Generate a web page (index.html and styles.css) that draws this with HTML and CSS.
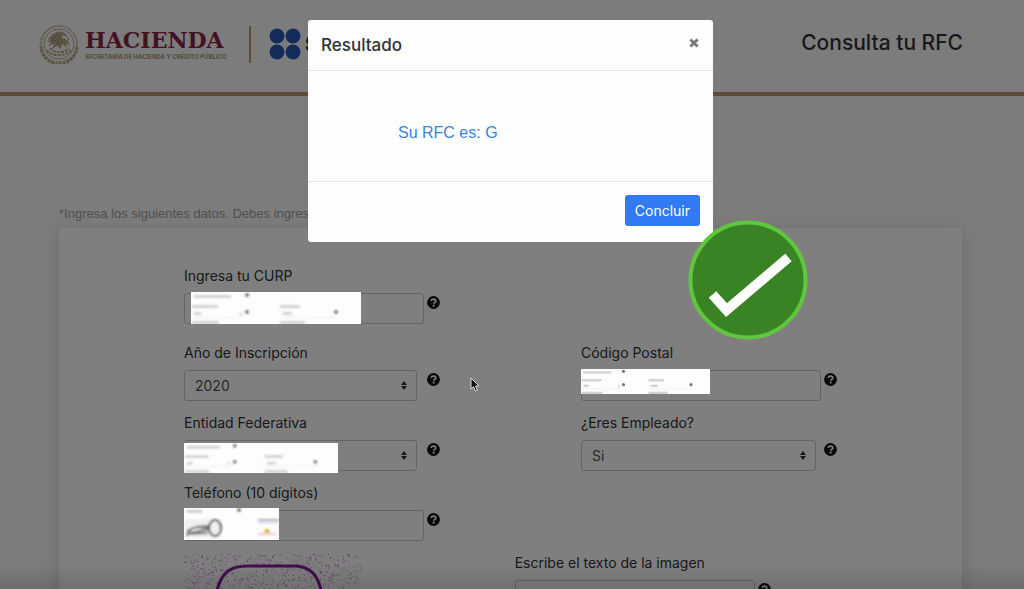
FILE: index.html
```html
<!DOCTYPE html>
<html lang="es">
    <head>
        <meta charset="utf-8">
        <meta name="viewport" content="width=device-width, initial-scale=1">
        <title>Consulta tu RFC</title>
        <link rel="stylesheet" href="styles.css">
    </head>
    <body>
        <!-- simbolos reutilizados -->
        <svg class="defs" aria-hidden="true">
            <symbol id="help" viewBox="0 0 512 512">
                <circle cx="256" cy="256" r="252" fill="#111"/>
                <path d="M160 192c12-46 46-70 96-70 54 0 90 30 90 74 0 62-82 56-82 112" fill="none" stroke="#fff" stroke-width="64"/>
                <circle cx="262" cy="378" r="42" fill="#fff"/>
            </symbol>
            <filter id="soft"><feGaussianBlur stdDeviation="0.9"/></filter>
            <symbol id="mask" viewBox="0 0 170 32" preserveAspectRatio="none">
                <rect width="170" height="32" fill="#fdfdfd"/>
                <g filter="url(#soft)" fill="#d2d2d6">
                    <rect x="3" y="3" width="37" height="3"/>
                    <rect x="1" y="13" width="26" height="3"/>
                    <rect x="89" y="13" width="20" height="3"/>
                    <rect x="3" y="20" width="7" height="3"/>
                    <rect x="49" y="20" width="2" height="4"/>
                    <rect x="92" y="20" width="9" height="3"/>
                    <rect x="1" y="29" width="27" height="3"/>
                    <rect x="89" y="29" width="25" height="3"/>
                    <rect x="0" y="25" width="50" height="1" fill="#eee"/>
                    <rect x="89" y="25" width="56" height="1" fill="#eee"/>
                    <circle cx="56" cy="3" r="2" fill="#777"/>
                    <circle cx="56" cy="20" r="2" fill="#777"/>
                    <circle cx="145" cy="20" r="2" fill="#777"/>
                </g>
            </symbol>
        </svg>

        <header class="header">
            <div class="brand">
                <svg class="seal" viewBox="0 0 40 40" aria-hidden="true">
                    <g fill="none" stroke="#b9a887">
                        <circle cx="20" cy="20" r="18" stroke-width="2" stroke-dasharray="1.4 1.1"/>
                        <path d="M2 22a18 18 0 0 0 36 0" stroke-width="3" stroke-dasharray="3 1"/>
                        <circle cx="20" cy="20" r="15" stroke-width="1"/>
                        <path d="M8 26c5 7 19 7 24 0M11 24c4 5 14 6 19 0" stroke-width="2" stroke-dasharray="3 1"/>
                    </g>
                    <path d="M9 16c3-6 9-10 15-8 3 1 4 3 3 5l-3-2-1 3c4 0 7 3 8 8l-4-3 1 5-5-4-1 5-4-3-5 3 2-5-6 2 3-4-4 0 4-3z" fill="#b9a887"/>
                    <path d="M12 15l9-4M13 18l10-4M17 20l7-3M27 12l3 3-2 2" fill="none" stroke="#9b8e70" stroke-width="1"/>
                </svg>
                <div class="hacienda">
                    <span class="hacienda-name">HACIENDA</span>
                    <span class="hacienda-sub">SECRETARÍA DE HACIENDA Y CRÉDITO PÚBLICO</span>
                </div>
                <span class="divider"></span>
                <svg class="sat-dots" viewBox="0 0 32 32" fill="#2a56b4" aria-hidden="true">
                    <circle cx="8" cy="8" r="7.5"/>
                    <circle cx="24" cy="8" r="7.5"/>
                    <circle cx="8" cy="24" r="7.5"/>
                    <circle cx="24" cy="24" r="7.5"/>
                </svg>
                <span class="sat">S</span>
            </div>
            <h1 class="title">Consulta tu RFC</h1>
        </header>

        <main class="content">
            <p class="hint">*Ingresa los siguientes datos. Debes ingresar</p>
            <form class="card">
                <div class="row row-first">
                    <div class="field">
                        <label for="curp">Ingresa tu CURP</label>
                        <input type="text" id="curp">
                        <svg class="help"><use href="#help"/></svg>
                        <svg class="mask mask-curp"><use href="#mask"/></svg>
                    </div>
                </div>
                <div class="row">
                    <div class="field">
                        <label for="anio">Año de Inscripción</label>
                        <div class="select"><select id="anio"><option>2020</option></select></div>
                        <svg class="help"><use href="#help"/></svg>
                    </div>
                    <div class="field">
                        <label for="cp">Código Postal</label>
                        <input type="text" id="cp">
                        <svg class="help"><use href="#help"/></svg>
                        <svg class="mask mask-cp"><use href="#mask"/></svg>
                    </div>
                </div>
                <div class="row">
                    <div class="field">
                        <label for="entidad">Entidad Federativa</label>
                        <div class="select"><select id="entidad"><option></option></select></div>
                        <svg class="help"><use href="#help"/></svg>
                        <svg class="mask mask-entidad"><use href="#mask"/></svg>
                    </div>
                    <div class="field">
                        <label for="empleado">¿Eres Empleado?</label>
                        <div class="select select-wide"><select id="empleado"><option>Si</option></select></div>
                        <svg class="help"><use href="#help"/></svg>
                    </div>
                </div>
                <div class="row">
                    <div class="field">
                        <label for="tel">Teléfono (10 dígitos)</label>
                        <input type="text" id="tel">
                        <svg class="help"><use href="#help"/></svg>
                        <svg class="mask mask-tel" viewBox="0 0 95 32">
                            <rect width="95" height="32" fill="#fdfdfd"/>
                            <g filter="url(#soft)">
                                <rect x="3" y="2" width="15" height="3" fill="#ccc"/>
                                <circle cx="55" cy="2" r="2" fill="#777"/>
                                <rect x="1" y="11" width="36" height="19" fill="#f0f0f0"/>
                                <path d="M3 28c1-9 12-10 22-10M3 23c8-5 14-4 22-3M6 25l20-4M4 26l20-1" fill="none" stroke="#777" stroke-width="2"/>
                                <ellipse cx="31" cy="20" rx="6" ry="8" fill="none" stroke="#555" stroke-width="2"/>
                                <path d="M74 12h21" stroke="#b0b0b4" stroke-width="2"/>
                                <path d="M74 15h21" stroke="#b9c2dd" stroke-width="1"/>
                                <path d="M74 26h18" stroke="#f2c9c9" stroke-width="2"/>
                                <path d="M80 24l3-3 3 3z" fill="#e5a200" stroke="#e5a200"/>
                            </g>
                        </svg>
                    </div>
                </div>
                <div class="row row-captcha">
                    <canvas class="captcha" id="captcha" width="178" height="60"></canvas>
                    <div class="field field-captcha">
                        <label for="texto">Escribe el texto de la imagen</label>
                        <input type="text" id="texto">
                        <svg class="help"><use href="#help"/></svg>
                    </div>
                </div>
            </form>
        </main>

        <div class="backdrop"></div>

        <div class="modal-wrap">
            <div class="modal" role="dialog" aria-labelledby="modal-title">
                <div class="modal-header">
                    <h2 class="modal-title" id="modal-title">Resultado</h2>
                    <button type="button" class="close" aria-label="Cerrar">
                        <svg viewBox="0 0 10 10"><path d="M2 2l6 6M8 2l-6 6" stroke="#777" stroke-width="2.4"/></svg>
                    </button>
                </div>
                <div class="modal-body">
                    <p class="result">Su RFC es: G</p>
                </div>
                <div class="modal-footer">
                    <button type="button" class="btn">Concluir</button>
                </div>
            </div>
        </div>

        <svg class="check" viewBox="0 0 120 120" aria-hidden="true">
            <circle cx="60" cy="60" r="57.5" fill="#3a8324" stroke="#5fc63e" stroke-width="4"/>
            <path d="M24.500 74.500L38.500 90L100.500 37.500" fill="none" stroke="#fff" stroke-width="10"/>
        </svg>

        <svg class="cursor" viewBox="0 0 10 15" aria-hidden="true">
            <path d="M1 1v11l2.500-2.300 1.800 4.100 2-0.900-1.800-3.900h3.500z" fill="#111" stroke="#ddd" stroke-width="1"/>
        </svg>

        <script src="captcha.js"></script>
    </body>
</html>
```

FILE: styles.css
```css
* {
    box-sizing: border-box;
}
body {
    margin: 0;
    height: 100vh;
    overflow: hidden;
    background: #f8f8f8;
    color: #303236;
    font-family: Inter, "Open Sans", sans-serif;
    font-size: 14px;
}
.defs {
    position: absolute;
    width: 0;
    height: 0;
}

/* encabezado */
.header {
    display: flex;
    align-items: center;
    justify-content: space-between;
    height: 96px;
    padding: 0 61px 4px 39px;
    border-bottom: 4px solid #b8946a;
}
.brand {
    display: flex;
    align-items: center;
}
.seal {
    width: 40px;
    height: 40px;
    margin-right: 6px;
}
.hacienda {
    display: flex;
    flex-direction: column;
    width: 164px;
}
.hacienda-name {
    color: #8a2444;
    font-family: "DejaVu Serif", serif;
    font-size: 22px;
    font-weight: bold;
    line-height: 26px;
}
.hacienda-sub {
    color: #a8977a;
    font-size: 6px;
    font-weight: 700;
    line-height: 8px;
    white-space: nowrap;
}
.divider {
    width: 2px;
    height: 37px;
    margin-right: 18px;
    background: #b8946a;
}
.sat-dots {
    width: 32px;
    height: 32px;
    margin-right: 4px;
}
.sat {
    color: #222;
    font-size: 22px;
    font-weight: 800;
}
.title {
    margin: 0;
    font-size: 21px;
    font-weight: 500;
    line-height: 24px;
    padding-bottom: 2px;
}

/* formulario */
.content {
    padding: 108px 62px 0 59px;
}
.hint {
    margin: 0 0 4px;
    color: #a0a0a0;
    font-family: "Liberation Sans", sans-serif;
    font-size: 13px;
    line-height: 20px;
}
.card {
    padding: 37px 0 40px 125px;
    background: #fff;
    box-shadow: 0 4px 16px rgba(0, 0, 0, .15);
}
.row {
    display: grid;
    grid-template-columns: 1fr 1fr;
    column-gap: 16px;
    margin-bottom: 11px;
}
.row-first {
    margin-bottom: 18px;
}
.row-captcha {
    grid-template-columns: 17fr 23fr;
    column-gap: 0;
}
.field {
    position: relative;
    display: grid;
    grid-template-columns: 63% 13px;
    column-gap: 3px;
    align-content: start;
}
.field-captcha {
    grid-template-columns: 240px 13px;
}
.field label {
    grid-column: 1 / -1;
    margin-bottom: 6px;
    line-height: 22px;
}
.field input,
.field select {
    width: 100%;
    height: 31px;
    padding: 0 10px;
    border: 1px solid #c8c8d0;
    border-radius: 3px;
    background: transparent;
    color: #555;
    font: inherit;
}
.field select {
    appearance: none;
}
.select {
    position: relative;
    width: 97%;
}
.select-wide {
    width: 98%;
}
.select::before,
.select::after {
    content: "";
    position: absolute;
    right: 10px;
    border: 3px solid transparent;
}
.select::before {
    top: 8px;
    border-bottom: 4px solid #333;
}
.select::after {
    top: 16px;
    border-top: 4px solid #333;
}
.help {
    width: 13px;
    height: 13px;
    margin-top: 3px;
}
.captcha {
    margin-top: 2px;
}

/* recuadros que tapan los datos personales */
.mask {
    position: absolute;
    z-index: 2;
}
.mask-curp {
    top: 27px;
    left: 7px;
    width: 170px;
    height: 32px;
}
.mask-cp {
    top: 27px;
    left: 0;
    width: 129px;
    height: 25px;
}
.mask-entidad {
    top: 31px;
    left: 0;
    width: 154px;
    height: 30px;
}
.mask-tel {
    top: 26px;
    left: 0;
    width: 95px;
    height: 32px;
}

/* modal */
.backdrop {
    position: fixed;
    inset: 0;
    z-index: 1;
    background: linear-gradient(transparent calc(100% - 24px), rgba(0, 0, 0, .12)), rgba(0, 0, 0, .5);
}
.modal-wrap {
    position: fixed;
    inset: 0 0 auto;
    z-index: 3;
    display: flex;
    justify-content: center;
    padding: 20px 3px 0 0;
}
.modal {
    width: 405px;
    border-radius: 3px;
    background: #fdfdfd;
}
.modal-header {
    display: flex;
    align-items: flex-start;
    justify-content: space-between;
    padding: 13px;
    border-bottom: 1px solid #e4e6e8;
}
.modal-title {
    margin: 0;
    font-size: 17px;
    font-weight: 500;
    line-height: 24px;
}
.close {
    width: 12px;
    height: 20px;
    padding: 0;
    border: 0;
    background: none;
}
.close svg {
    display: block;
    width: 12px;
}
.modal-body {
    padding: 50px 90px 36px;
}
.result {
    width: 99px;
    margin: 0;
    overflow: hidden;
    color: #3a82e4;
    font-family: "Liberation Sans", sans-serif;
    font-size: 16px;
    line-height: 24px;
    white-space: nowrap;
}
.modal-footer {
    display: flex;
    justify-content: flex-end;
    padding: 13px 13px 16px;
    border-top: 1px solid #e4e6e8;
}
.btn {
    height: 31px;
    padding: 0 10px;
    border: 0;
    border-radius: 3px;
    background: #3279f6;
    color: #fff;
    font: inherit;
}

.check {
    position: fixed;
    top: 220px;
    left: 688px;
    z-index: 4;
    width: 120px;
    height: 120px;
}
.cursor {
    position: fixed;
    top: 377px;
    left: 470px;
    z-index: 4;
    width: 10px;
    height: 15px;
}
```

FILE: captcha.js
```javascript
var canvas = document.getElementById('captcha');
var ctx = canvas.getContext('2d');
var seed = 7;

function rnd() {
    seed = (seed * 16807) % 2147483647;
    return seed / 2147483647;
}

// ruido de fondo
ctx.fillStyle = '#a030b0';
for (var i = 0; i < 1000; i++) {
    ctx.globalAlpha = 0.3 + rnd() * 0.5;
    ctx.fillRect(rnd() * 178, rnd() * 60, 1, 1);
}

// trazo
ctx.globalAlpha = 1;
ctx.strokeStyle = '#8a1a9c';
ctx.lineWidth = 3;
ctx.beginPath();
ctx.moveTo(32, 40);
ctx.bezierCurveTo(37, 18, 46, 12, 64, 12);
ctx.lineTo(112, 12);
ctx.bezierCurveTo(126, 13, 134, 20, 138, 40);
ctx.stroke();
```
